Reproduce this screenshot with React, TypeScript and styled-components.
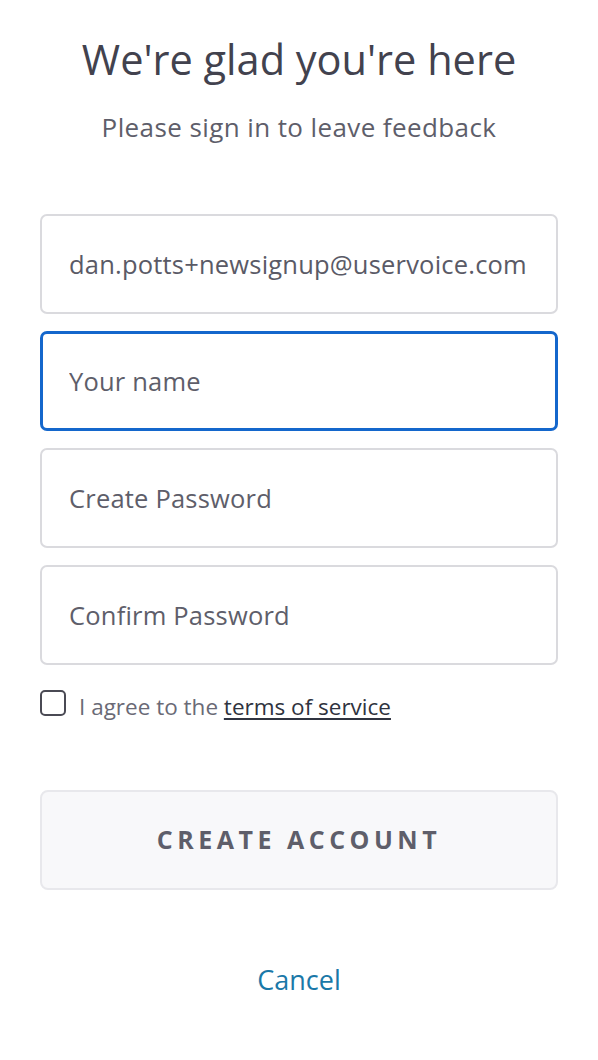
import React from "react";
import styled, { createGlobalStyle } from "styled-components";

const GlobalStyle = createGlobalStyle`
  body {
    margin: 0;
    background: #ffffff;
    font-family: "Open Sans", "Lato", sans-serif;
  }
`;

const Page = styled.div`
  width: 598px;
  padding: 33px 40px 0;
  box-sizing: border-box;
  display: flex;
  flex-direction: column;
`;

const Title = styled.h1`
  margin: 0;
  font-size: 41.5px;
  line-height: 52px;
  font-weight: 400;
  color: #42424e;
  text-align: center;
`;

const Subtitle = styled.p`
  margin: 27px 0 0;
  font-size: 26px;
  line-height: 30px;
  letter-spacing: 0.4px;
  color: #5e5e6a;
  text-align: center;
`;

const Fields = styled.div`
  margin-top: 72px;
  display: flex;
  flex-direction: column;
  gap: 17px;
`;

const Field = styled.input<{ $focused?: boolean }>`
  height: 100px;
  box-sizing: border-box;
  width: 100%;
  border-radius: 7px;
  border: ${(p) => (p.$focused ? "3px solid #1467cc" : "2px solid #dadade")};
  padding: 0 ${(p) => (p.$focused ? "26px" : "27px")};
  font-family: inherit;
  font-size: 25.5px;
  letter-spacing: 0.2px;
  color: #5a5a66;
  background: #fff;
  outline: none;

  &::placeholder {
    color: #5e5e6a;
  }
`;

const AgreeRow = styled.label`
  margin-top: 25px;
  display: flex;
  align-items: flex-start;
  gap: 13px;
  font-size: 22.5px;
  line-height: 34px;
  color: #6a6a76;
`;

const Box = styled.span`
  width: 26px;
  height: 26px;
  box-sizing: border-box;
  border: 2px solid #4a4a54;
  border-radius: 5px;
  flex-shrink: 0;
`;

const Terms = styled.a`
  color: #2f3340;
  text-decoration: underline;
  text-underline-offset: 3px;
`;

const CreateButton = styled.button`
  margin-top: 66px;
  height: 100px;
  width: 100%;
  border: 2px solid #e8e8ec;
  border-radius: 8px;
  background: #f8f8fa;
  font-family: inherit;
  font-size: 25px;
  font-weight: 700;
  letter-spacing: 4.5px;
  color: #5e5e6a;
  padding-bottom: 4px;
`;

const Cancel = styled.a`
  margin-top: 75px;
  align-self: center;
  font-size: 27px;
  line-height: 30px;
  color: #1a78a8;
  text-decoration: none;
`;

export default function App() {
  return (
    <>
      <GlobalStyle />
      <Page>
        <Title>We're glad you're here</Title>
        <Subtitle>Please sign in to leave feedback</Subtitle>
        <Fields>
          <Field defaultValue="dan.potts+newsignup@uservoice.com" />
          <Field $focused placeholder="Your name" />
          <Field type="password" placeholder="Create Password" />
          <Field type="password" placeholder="Confirm Password" />
        </Fields>
        <AgreeRow>
          <Box />
          <span>
            I agree to the <Terms href="#">terms of service</Terms>
          </span>
        </AgreeRow>
        <CreateButton>CREATE ACCOUNT</CreateButton>
        <Cancel href="#">Cancel</Cancel>
      </Page>
    </>
  );
}
